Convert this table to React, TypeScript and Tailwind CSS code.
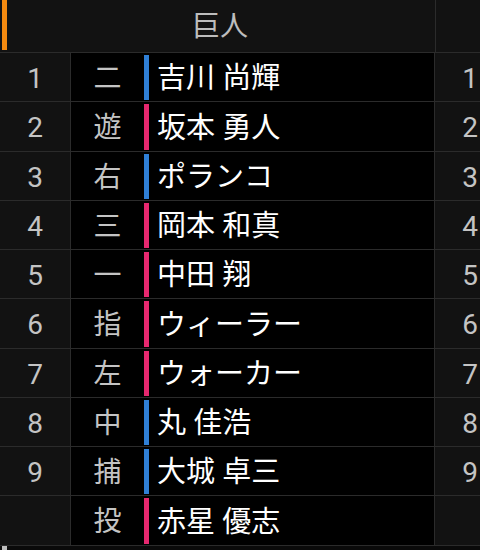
import React from "react";

type P = { n: string; pos: string; name: string; c: "b" | "p" };

const players: P[] = [
  { n: "1", pos: "二", name: "吉川 尚輝", c: "b" },
  { n: "2", pos: "遊", name: "坂本 勇人", c: "p" },
  { n: "3", pos: "右", name: "ポランコ", c: "b" },
  { n: "4", pos: "三", name: "岡本 和真", c: "p" },
  { n: "5", pos: "一", name: "中田 翔", c: "p" },
  { n: "6", pos: "指", name: "ウィーラー", c: "p" },
  { n: "7", pos: "左", name: "ウォーカー", c: "p" },
  { n: "8", pos: "中", name: "丸 佳浩", c: "b" },
  { n: "9", pos: "捕", name: "大城 卓三", c: "b" },
  { n: "", pos: "投", name: "赤星 優志", c: "p" },
];

export default function App() {
  return (
    <div
      className="w-[480px] h-[550px] overflow-hidden bg-[#0a0a0a]"
      style={{ fontFamily: 'Roboto, "Noto Sans CJK JP", sans-serif' }}
    >
      <div className="w-[505px]">
        <div className="flex h-[53px] border-b border-[#2b2b2b] bg-[#121212]">
          <div className="w-[435px] flex items-start">
            <div className="w-[5px] h-[50px] ml-[2px] bg-[#f58a10]" />
            <div className="flex-1 h-[52px] flex items-center justify-center text-[28px] text-[#bdbdbd] pr-[2px] pt-[1px]">
              巨人
            </div>
          </div>
          <div className="w-[70px] border-l border-[#2b2b2b]" />
        </div>
        {players.map((p, i) => (
          <div key={i} className="flex h-[49.25px] border-b border-[#2b2b2b]">
            <div className="w-[71px] bg-[#121212] border-r border-[#2b2b2b] flex items-center justify-center text-[28px] text-[#c4c4c4] pt-[4px]">
              {p.n}
            </div>
            <div className="w-[363px] bg-black flex">
              <div className="w-[73px] flex items-center justify-center text-[28px] text-[#c4c4c4] pt-[4px]">
                {p.pos}
              </div>
              <div
                className={
                  "w-[5px] mt-[2px] mb-[1px] " +
                  (p.c === "b" ? "bg-[#2f7fd6]" : "bg-[#e6286f]")
                }
              />
              <div className="flex items-center pl-[8px] text-[29px] text-white pt-[4px] whitespace-nowrap">
                {p.name}
              </div>
            </div>
            <div className="w-[71px] bg-[#121212] border-l border-[#2b2b2b] flex items-center justify-center text-[28px] text-[#c4c4c4] pt-[4px]">
              {p.n}
            </div>
          </div>
        ))}
        <div className="h-[5px] flex">
          <div className="w-[5px] ml-[2px] bg-[#bdbdbd]" />
        </div>
      </div>
    </div>
  );
}
